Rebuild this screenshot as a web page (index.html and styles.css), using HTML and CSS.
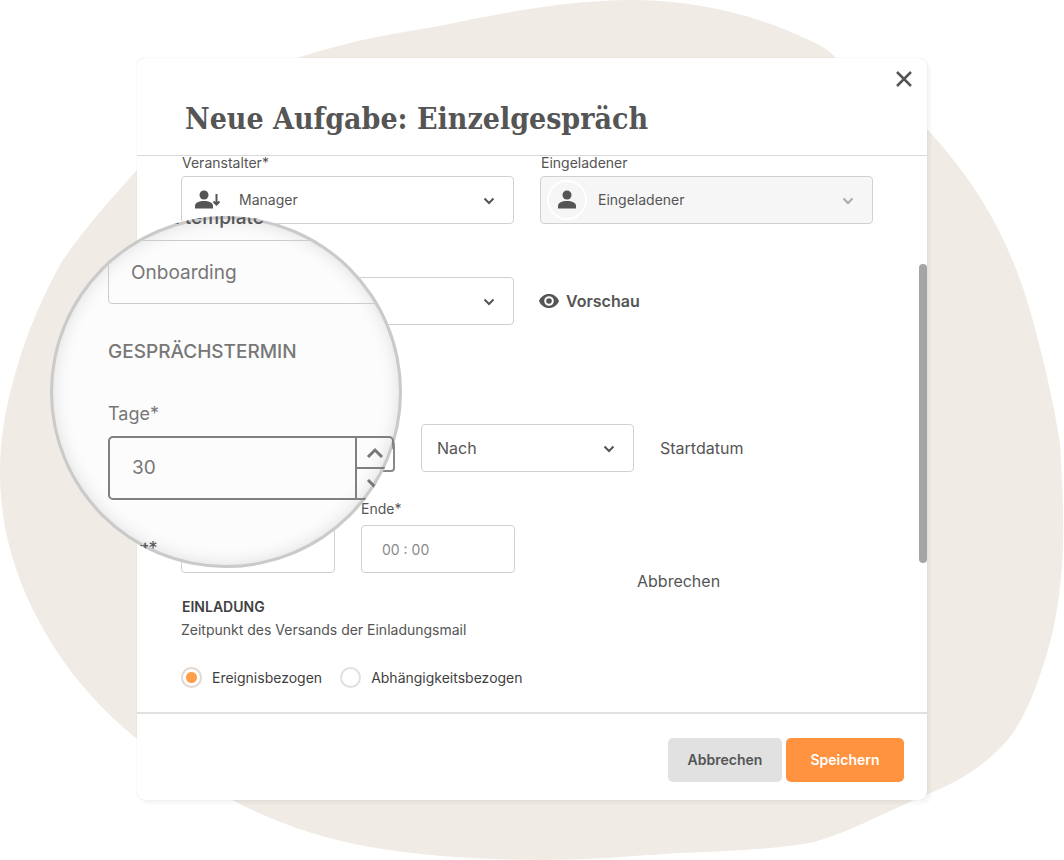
FILE: index.html
```html
<!DOCTYPE html>
<html lang="de">
<head>
    <meta charset="UTF-8">
    <meta name="viewport" content="width=device-width, initial-scale=1.0">
    <title>Neue Aufgabe: Einzelgespräch</title>
    <link rel="stylesheet" href="styles.css">
</head>
<body>
    <div class="stage">
        <svg class="blob" viewBox="0 0 1064 860" preserveAspectRatio="none" aria-hidden="true">
            <path d="M297 58C350 41 390 34 434 27C500 13 570 0 631 0C672 0 710 6 746 16C770 23 795 33 815 43C824 47 831 52 836 58L880 85C896 97 912 113 928 130C960 165 986 202 1004 241C1022 280 1030 308 1038 340C1046 370 1055 410 1060 444C1062 480 1064 510 1063 548C1061 595 1054 635 1042 669C1030 705 1018 732 997 751C978 770 955 783 928 794C890 810 850 832 814 842C770 850 725 851 678 853C632 856 590 860 543 860C490 860 430 857 370 847C320 838 276 823 232 800L137 739C105 713 77 683 54 647C33 614 16 577 7 537C2 514 0 492 0 472C0 440 5 410 14 378C25 336 42 298 61 263C83 230 110 200 137 170Z"/>
        </svg>

        <form class="dialog" role="dialog" aria-labelledby="dialog-title">
            <header class="dialog-header">
                <button type="button" class="close" aria-label="Schließen">
                    <svg viewBox="0 0 16 16"><path d="M1 1L15 15M15 1L1 15"/></svg>
                </button>
                <h1 id="dialog-title">Neue Aufgabe: Einzelgespräch</h1>
            </header>

            <div class="dialog-body">
                <div class="people">
                    <div class="field">
                        <label for="host">Veranstalter*</label>
                        <div class="select">
                            <svg class="person" viewBox="0 0 27 20"><circle cx="9" cy="5" r="4.5"/><path d="M0 18.500V16C0 12.500 4 11 9 11S18 12.500 18 16V18.500Z"/><path class="arrow" d="M21.500 4V14M18.500 11.500L21.500 14.500L24.500 11.500"/></svg>
                            <select id="host"><option>Manager</option></select>
                            <svg class="chevron" viewBox="0 0 12 8"><path d="M1.500 1.500L6 6L10.500 1.500"/></svg>
                        </div>
                    </div>
                    <div class="field">
                        <label for="guest">Eingeladener</label>
                        <div class="select disabled">
                            <span class="avatar"><svg viewBox="0 0 18 20"><circle cx="9" cy="5" r="4.500"/><path d="M0 18.500V16C0 12.500 4 11 9 11S18 12.500 18 16V18.500Z"/></svg></span>
                            <select id="guest" disabled><option>Eingeladener</option></select>
                            <svg class="chevron" viewBox="0 0 12 8"><path d="M1.500 1.500L6 6L10.500 1.500"/></svg>
                        </div>
                    </div>
                </div>

                <div class="template">
                    <div class="select">
                        <select aria-label="Vorlage"><option></option></select>
                        <svg class="chevron" viewBox="0 0 12 8"><path d="M1.500 1.500L6 6L10.500 1.500"/></svg>
                    </div>
                    <button type="button" class="preview">
                        <svg viewBox="0 0 20 14"><path fill-rule="evenodd" d="M10 0C5.500 0 1.700 2.700 0 7C1.700 11.300 5.500 14 10 14S18.300 11.300 20 7C18.300 2.700 14.500 0 10 0ZM10 11.800A4.800 4.800 0 1 1 10 2.200A4.800 4.800 0 0 1 10 11.800Z"/><circle cx="10" cy="7" r="2.800"/></svg>
                        Vorschau
                    </button>
                </div>

                <div class="schedule">
                    <div class="stepper">
                        <input type="text" aria-label="Tage">
                        <span class="steps"><button type="button" aria-label="Mehr"></button><button type="button" aria-label="Weniger"></button></span>
                    </div>
                    <div class="select relation">
                        <select aria-label="Zeitbezug"><option>Nach</option></select>
                        <svg class="chevron" viewBox="0 0 12 8"><path d="M1.500 1.500L6 6L10.500 1.500"/></svg>
                    </div>
                    <span>Startdatum</span>
                </div>

                <div class="times">
                    <input type="text" class="time" aria-label="Startzeit">
                    <div class="field">
                        <label for="end">Ende*</label>
                        <input type="text" class="time" id="end" placeholder="00 : 00">
                    </div>
                    <a class="cancel-link" href="#">Abbrechen</a>
                </div>

                <h2>EINLADUNG</h2>
                <p>Zeitpunkt des Versands der Einladungsmail</p>
                <div class="radios">
                    <input type="radio" name="send" id="event" checked>
                    <label for="event">Ereignisbezogen</label>
                    <input type="radio" name="send" id="dependency">
                    <label for="dependency">Abhängigkeitsbezogen</label>
                </div>
                <div class="scrollbar"></div>
            </div>

            <footer class="dialog-footer">
                <button type="button" class="button">Abbrechen</button>
                <button type="submit" class="button primary">Speichern</button>
            </footer>

            <!-- Magnifying glass over the left half of the form -->
            <div class="lens">
                <label class="lens-title" for="lens-template">d template</label>
                <input type="text" id="lens-template" class="lens-template" value="Onboarding">
                <h2>GESPRÄCHSTERMIN</h2>
                <label for="lens-days">Tage*</label>
                <div class="lens-stepper">
                    <input type="text" id="lens-days" value="30">
                    <span class="steps">
                        <button type="button" aria-label="Mehr Tage"><svg viewBox="0 0 18 12"><path d="M2 10L9 3L16 10"/></svg></button>
                        <button type="button" aria-label="Weniger Tage"><svg viewBox="0 0 18 12"><path d="M2 2L9 9L16 2"/></svg></button>
                    </span>
                </div>
                <div class="lens-start">Start*</div>
            </div>
        </form>
    </div>
</body>
</html>
```

FILE: styles.css
```css
* {
    box-sizing: border-box;
}
body {
    margin: 0;
    background-color: #ffffff;
    color: #555555;
    font-family: Inter, "Liberation Sans", sans-serif;
    font-size: 14px;
    line-height: 16px;
}
h1, h2, p {
    margin: 0;
}
button, input, select {
    font: inherit;
    color: inherit;
}
button {
    padding: 0;
    border: none;
    background: none;
    cursor: pointer;
}
svg {
    display: block;
    fill: #555555;
}
.stage {
    position: relative;
    padding: 58px 137px 60px;
    overflow: hidden;
}
.blob {
    position: absolute;
    inset: 0;
    width: 100%;
    height: 100%;
    fill: #f0ebe4;
}
.dialog {
    position: relative;
    background-color: #ffffff;
    border-radius: 8px;
    box-shadow: 4px 4px 2px rgba(0, 0, 0, 0.03), 0 0 1px rgba(0, 0, 0, 0.2);
}

/* Header */
.dialog-header {
    display: flex;
    flex-direction: column;
    padding: 13px 15px 16px 48px;
    border-bottom: 1px solid #d8d8d8;
}
.close {
    align-self: flex-end;
}
.close svg {
    width: 16px;
    height: 16px;
}
.close path {
    stroke: #555555;
    stroke-width: 2.5;
}
h1 {
    margin-top: 12px;
    font-family: "DejaVu Serif Condensed", "DejaVu Serif", serif;
    font-size: 30px;
    font-weight: bold;
    line-height: 40px;
}

/* Form */
.dialog-body {
    position: relative;
    padding: 0 54px 24px 44px;
}
.field label {
    display: block;
    padding: 0 1px;
    margin-bottom: 6px;
}
.people {
    display: grid;
    grid-template-columns: 1fr 1fr;
    gap: 26px;
}
.people label {
    line-height: 14px;
    margin-bottom: 6px;
}
.select {
    position: relative;
}
.select select {
    display: block;
    width: 100%;
    height: 48px;
    padding: 0 40px 0 15px;
    border: 1px solid #d0d0d0;
    border-radius: 4px;
    background-color: #ffffff;
    appearance: none;
    opacity: 1;
}
.people select {
    padding-left: 57px;
}
.disabled select {
    background-color: #f6f6f6;
}
.chevron {
    position: absolute;
    top: 21px;
    right: 19px;
    width: 12px;
    height: 8px;
}
.chevron path {
    fill: none;
    stroke: #555555;
    stroke-width: 2;
}
.disabled .chevron path {
    stroke: #aaaaaa;
}
.person {
    position: absolute;
    top: 14px;
    left: 14px;
    width: 27px;
    height: 20px;
}
.person .arrow {
    fill: none;
    stroke: #555555;
    stroke-width: 2;
}
.avatar {
    position: absolute;
    top: 4px;
    left: 7px;
    padding: 8px 9px;
    border: 2px solid #ffffff;
    border-radius: 50%;
}
.avatar svg {
    width: 18px;
    height: 20px;
}
.template {
    display: grid;
    grid-template-columns: 1fr 1fr;
    gap: 24px;
    margin-top: 53px;
}
.template .select {
    margin-right: 1px;
}
.preview {
    display: flex;
    align-items: center;
    gap: 7px;
    font-size: 16px;
    font-weight: 600;
}
.preview svg {
    width: 20px;
    height: 14px;
}
.schedule {
    display: flex;
    align-items: center;
    gap: 26px;
    margin-top: 99px;
    font-size: 16px;
}
.stepper {
    display: flex;
    width: 214px;
    height: 48px;
    border: 2px solid #888888;
    border-radius: 4px;
}
.stepper input {
    width: 180px;
    border: none;
    background: none;
}
.stepper .steps {
    display: grid;
    flex: 1;
    border-left: 1px solid #777777;
}
.stepper button + button {
    border-top: 1px solid #777777;
}
.relation {
    width: 213px;
}
.times {
    display: flex;
    align-items: flex-end;
    gap: 26px;
    margin-top: 29px;
}
.time {
    display: block;
    width: 154px;
    height: 48px;
    padding: 0 20px;
    border: 1px solid #d0d0d0;
    border-radius: 4px;
    background-color: #ffffff;
}
.time::placeholder {
    color: #8a8a8a;
    opacity: 1;
}
.times label {
    padding: 0;
    margin-bottom: 8px;
}
.cancel-link {
    margin: 0 0 -18px 96px;
    color: inherit;
    font-size: 16px;
    line-height: 20px;
    text-decoration: none;
}
.dialog-body h2 {
    margin-top: 26px;
    padding-left: 1px;
    color: #3f3f3f;
    font-size: 14px;
    font-weight: 600;
}
.dialog-body p {
    margin-top: 7px;
}
.radios {
    display: flex;
    align-items: center;
    margin-top: 29px;
    color: #3f3f3f;
}
.radios input {
    width: 21px;
    height: 21px;
    margin: 0 10px 0 0;
    border: 2px solid #e0e0e0;
    border-radius: 50%;
    background-color: #ffffff;
    appearance: none;
}
.radios input:checked {
    border-color: #e3d8d0;
    background-image: radial-gradient(circle, #ff9f4a 5px, transparent 6px);
}
.radios label {
    margin-right: 18px;
}
.scrollbar {
    position: absolute;
    top: 108px;
    right: 0;
    width: 8px;
    height: 299px;
    border-radius: 4px;
    background-color: #a5a5a5;
}

/* Footer */
.dialog-footer {
    display: flex;
    justify-content: flex-end;
    gap: 4px;
    padding: 24px 23px 18px;
    border-top: 2px solid #e0e0e0;
}
.button {
    width: 114px;
    height: 44px;
    border-radius: 5px;
    background-color: #e1e1e1;
    font-size: 14px;
    font-weight: 600;
}
.primary {
    width: 118px;
    background-color: #ff933f;
    color: #ffffff;
}

/* Lens */
.lens {
    position: absolute;
    top: 158px;
    left: -87px;
    width: 352px;
    height: 352px;
    padding-left: 58px;
    border-radius: 50%;
    background-color: #fcfcfc;
    box-shadow: inset 0 0 0 3px #cacaca, inset 0 0 20px rgba(0, 0, 0, 0.16);
    color: #777777;
    font-size: 18px;
    line-height: 24px;
    overflow: hidden;
}
.lens label {
    display: block;
}
.lens .lens-title {
    height: 24px;
    margin-left: 60px;
    color: #555555;
    font-size: 19px;
    font-weight: 500;
    line-height: 4px;
}
.lens-template {
    display: block;
    width: 360px;
    height: 64px;
    padding: 0 22px;
    border: 1px solid #cccccc;
    border-radius: 4px;
    background: none;
    font-size: 19px;
}
.lens h2 {
    margin: 36px 0 38px;
    font-size: 19px;
    font-weight: 500;
}
.lens-stepper {
    display: flex;
    width: 286px;
    height: 64px;
    margin-top: 10px;
    border: 2px solid #808080;
    border-radius: 5px;
}
.lens-stepper input {
    width: 245px;
    padding: 0 22px;
    border: none;
    background: none;
    font-size: 19px;
}
.lens-stepper .steps {
    display: grid;
    flex: 1;
    border-left: 2px solid #808080;
}
.lens-stepper button {
    display: flex;
    align-items: center;
    justify-content: center;
}
.lens-stepper button + button {
    border-top: 2px solid #808080;
}
.lens-stepper svg {
    width: 18px;
    height: 12px;
}
.lens-stepper path {
    fill: none;
    stroke: #777777;
    stroke-width: 3;
}
.lens-start {
    margin-top: 37px;
    color: #555555;
}
```
